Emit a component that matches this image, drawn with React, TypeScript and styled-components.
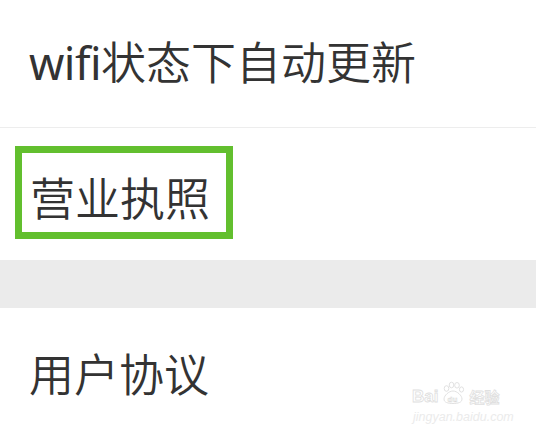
import React from "react";
import styled, { createGlobalStyle } from "styled-components";

const Global = createGlobalStyle`
  html, body { margin: 0; padding: 0; background: #ffffff; }
  body { font-family: "Noto Sans", "Noto Sans CJK SC", sans-serif; }
`;

const Page = styled.div`
  width: 536px;
  height: 436px;
  overflow: hidden;
  position: relative;
  background: #ffffff;
  display: flex;
  flex-direction: column;
`;

const Row = styled.div<{ $h: number; $divider?: boolean; $pad?: number; $shift?: number }>`
  height: ${(p) => p.$h}px;
  flex: none;
  display: flex;
  align-items: center;
  padding-left: ${(p) => p.$pad ?? 29}px;
  padding-bottom: ${(p) => p.$shift ?? 0}px;
  box-sizing: border-box;
  border-bottom: ${(p) => (p.$divider ? "1px solid #ededed" : "none")};
`;

const Label = styled.span`
  font-family: "Noto Sans CJK SC", sans-serif;
  font-weight: 350;
  font-size: 45px;
  line-height: 1;
  color: #333333;
  white-space: nowrap;
`;

const Latin = styled.span`
  font-family: "Noto Sans", sans-serif;
  font-weight: 400;
  letter-spacing: -0.5px;
`;

const Highlight = styled.div`
  width: 218px;
  height: 93px;
  box-sizing: border-box;
  border: 7.5px solid #62bf2e;
  display: flex;
  align-items: center;
  padding-left: 8px;
  padding-top: 8px;
  margin-top: -4px;
`;

const Band = styled.div`
  height: 48px;
  flex: none;
  background: #ebebeb;
`;

const Watermark = styled.div`
  position: absolute;
  left: 412px;
  top: 381px;
  display: flex;
  flex-direction: column;
  align-items: flex-start;
`;

const MarkTop = styled.div`
  display: flex;
  align-items: flex-end;
  gap: 1px;
  font-family: "Liberation Sans", "Noto Sans CJK SC", sans-serif;
  font-weight: bold;
  font-size: 17px;
  line-height: 1;
  color: #ffffff;
  -webkit-text-stroke: 0.8px #e0e0e0;
`;

const Han = styled.span`
  font-size: 15px;
  margin-left: 1px;
`;

const MarkSub = styled.div`
  font-family: "Liberation Sans", sans-serif;
  font-style: italic;
  font-size: 12.5px;
  line-height: 1;
  margin-top: 6px;
  margin-left: 1px;
  color: #ebebeb;
`;

const Paw = () => (
  <svg width="28" height="24" viewBox="0 0 28 23" fill="#ffffff" stroke="#dedede" strokeWidth="0.9">
    <ellipse cx="7.5" cy="7" rx="2.3" ry="2.8" />
    <ellipse cx="12.5" cy="3.5" rx="2.3" ry="2.8" />
    <ellipse cx="18" cy="3.8" rx="2.3" ry="2.8" />
    <ellipse cx="22.5" cy="8" rx="2.1" ry="2.6" />
    <path d="M14 9.5 C10 9.5 5 14 5 17.5 C5 21 9 22 14 22 C19 22 23 21 23 17.5 C23 14 18 9.5 14 9.5 Z" />
    <text x="8.6" y="20" fontSize="8" fontFamily="Liberation Sans, sans-serif" fontWeight="bold" fill="#ffffff" stroke="#d8d8d8" strokeWidth="0.5">du</text>
  </svg>
);

export default function App() {
  return (
    <>
      <Global />
      <Page>
        <Row $h={128} $divider $shift={4}>
          <Label>
            <Latin>wifi</Latin>状态下自动更新
          </Label>
        </Row>
        <Row $h={132} $pad={15}>
          <Highlight>
            <Label>营业执照</Label>
          </Highlight>
        </Row>
        <Band />
        <Row $h={128}>
          <Label>用户协议</Label>
        </Row>
        <Watermark>
          <MarkTop>
            <span>Bai</span>
            <Paw />
            <Han>经验</Han>
          </MarkTop>
          <MarkSub>jingyan.baidu.com</MarkSub>
        </Watermark>
      </Page>
    </>
  );
}
